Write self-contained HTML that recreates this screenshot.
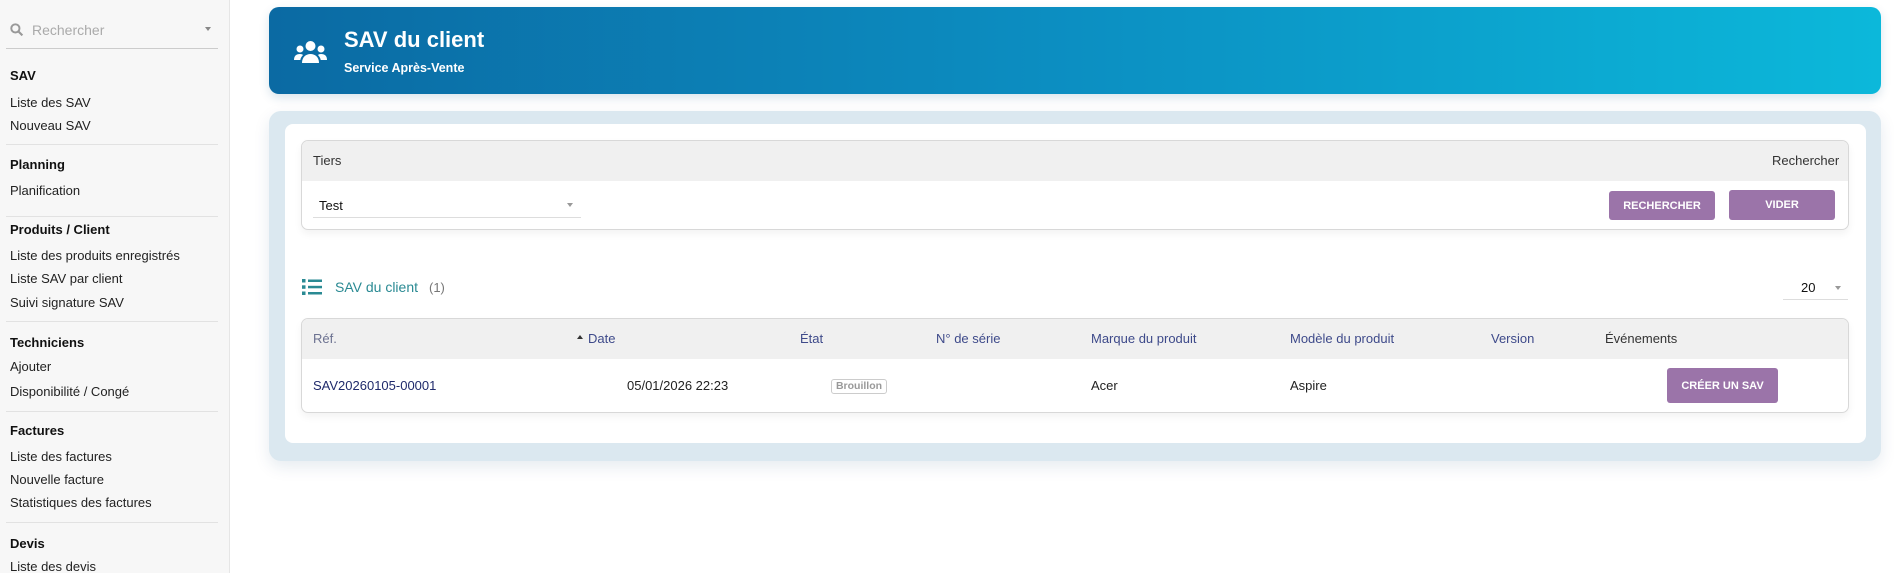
<!DOCTYPE html>
<html><head><meta charset="utf-8"><style>
*{box-sizing:border-box;margin:0;padding:0}
body{width:1894px;height:573px;overflow:hidden;background:#fff;font-family:"Liberation Sans",sans-serif;font-size:13px;color:#222;position:relative}
.abs{position:absolute;white-space:nowrap}
#side{position:absolute;left:0;top:0;width:230px;height:573px;background:#f7f7f7;border-right:1px solid #e6e6e6}
.h{font-weight:bold;font-size:13px;color:#111}
.i{font-size:13px;color:#222}
.dv{position:absolute;left:6px;width:212px;height:1px;background:#e2e2e2}
.btn{position:absolute;background:#9b74a9;color:#fff;font-weight:bold;font-size:11px;border-radius:3px;display:flex;align-items:center;justify-content:center}
.th{color:#3e4a8a;font-size:13px}
</style></head><body>
<div id="side">
<svg class="abs" style="left:10px;top:23px" width="14" height="14" viewBox="0 0 13 13"><circle cx="5" cy="5" r="3.8" fill="none" stroke="#999" stroke-width="1.8"/><path d="M8 8l3.5 3.5" stroke="#999" stroke-width="2"/></svg>
<div class="abs" style="left:32px;top:22px;color:#aaa;font-size:14px">Rechercher</div>
<div class="abs" style="left:205px;top:27px;border:3.5px solid transparent;border-top:4px solid #888;"></div>
<div class="abs" style="left:6px;top:48px;width:212px;height:1px;background:#ccc"></div>
<div class="abs h" style="left:10px;top:68px">SAV</div>
<div class="abs i" style="left:10px;top:95px">Liste des SAV</div>
<div class="abs i" style="left:10px;top:118px">Nouveau SAV</div>
<div class="dv" style="top:144px"></div>
<div class="abs h" style="left:10px;top:157px">Planning</div>
<div class="abs i" style="left:10px;top:183px">Planification</div>
<div class="dv" style="top:216px"></div>
<div class="abs h" style="left:10px;top:222px">Produits / Client</div>
<div class="abs i" style="left:10px;top:248px">Liste des produits enregistrés</div>
<div class="abs i" style="left:10px;top:271px">Liste SAV par client</div>
<div class="abs i" style="left:10px;top:295px">Suivi signature SAV</div>
<div class="dv" style="top:321px"></div>
<div class="abs h" style="left:10px;top:335px">Techniciens</div>
<div class="abs i" style="left:10px;top:359px">Ajouter</div>
<div class="abs i" style="left:10px;top:384px">Disponibilité / Congé</div>
<div class="dv" style="top:411px"></div>
<div class="abs h" style="left:10px;top:423px">Factures</div>
<div class="abs i" style="left:10px;top:449px">Liste des factures</div>
<div class="abs i" style="left:10px;top:472px">Nouvelle facture</div>
<div class="abs i" style="left:10px;top:495px">Statistiques des factures</div>
<div class="dv" style="top:522px"></div>
<div class="abs h" style="left:10px;top:536px">Devis</div>
<div class="abs i" style="left:10px;top:559px">Liste des devis</div>
</div>

<div class="abs" style="left:269px;top:7px;width:1612px;height:87px;border-radius:10px;background:linear-gradient(90deg,#0b6aa3,#0c8fc2 50%,#0cb8da);box-shadow:0 4px 10px rgba(0,80,130,.15)"></div>
<svg class="abs" style="left:294px;top:40px" width="33" height="24" viewBox="0 0 33 24"><circle cx="16.5" cy="6" r="5" fill="#fff"/><circle cx="6" cy="9" r="3.5" fill="#fff"/><circle cx="27" cy="9" r="3.5" fill="#fff"/><path d="M8 23c0-6 4-9 8.5-9s8.5 3 8.5 9z" fill="#fff"/><path d="M0 20c0-4 2-6 6-6 1.5 0 2.5.4 3 1-1.5 1.5-2.5 3.5-2.7 5z" fill="#fff"/><path d="M33 20c0-4-2-6-6-6-1.5 0-2.5.4-3 1 1.5 1.5 2.5 3.5 2.7 5z" fill="#fff"/></svg>
<div class="abs" style="left:344px;top:27px;color:#fff;font-weight:bold;font-size:22px">SAV du client</div>
<div class="abs" style="left:344px;top:61px;color:#fff;font-weight:bold;font-size:12.5px">Service Après-Vente</div>

<div class="abs" style="left:269px;top:111px;width:1612px;height:350px;border-radius:12px;background:#dbe8f0;box-shadow:0 6px 16px rgba(0,60,110,.1)"></div>
<div class="abs" style="left:285px;top:124px;width:1581px;height:319px;border-radius:8px;background:#fff"></div>

<div class="abs" style="left:301px;top:140px;width:1548px;height:90px;border:1px solid #d8d8d8;border-radius:7px;overflow:hidden;box-shadow:0 4px 8px rgba(0,0,0,.05)">
<div style="height:40px;background:#f0f0f0"></div></div>
<div class="abs" style="left:313px;top:153px;color:#333">Tiers</div>
<div class="abs" style="left:1772px;top:153px;color:#333">Rechercher</div>
<div class="abs" style="left:319px;top:198px;color:#111">Test</div>
<div class="abs" style="left:567px;top:203px;border:3px solid transparent;border-top:4px solid #999"></div>
<div class="abs" style="left:313px;top:217px;width:268px;height:1px;background:#ddd"></div>
<div class="btn" style="left:1609px;top:191px;width:106px;height:29px">RECHERCHER</div>
<div class="btn" style="left:1729px;top:190px;width:106px;height:30px">VIDER</div>

<svg class="abs" style="left:302px;top:279px" width="20" height="16" viewBox="0 0 20 16"><g fill="#2a8a93"><rect x="0" y="0" width="3.5" height="3.5"/><rect x="0" y="6.3" width="3.5" height="3.5"/><rect x="0" y="12.5" width="3.5" height="3.5"/><rect x="6" y="0.5" width="14" height="2.5"/><rect x="6" y="6.8" width="14" height="2.5"/><rect x="6" y="13" width="14" height="2.5"/></g></svg>
<div class="abs" style="left:335px;top:279px;color:#2a8a93;font-size:14px">SAV du client</div>
<div class="abs" style="left:429px;top:280px;color:#777;font-size:13px">(1)</div>
<div class="abs" style="left:1801px;top:280px;color:#111">20</div>
<div class="abs" style="left:1835px;top:286px;border:3px solid transparent;border-top:4px solid #999"></div>
<div class="abs" style="left:1783px;top:299px;width:65px;height:1px;background:#ddd"></div>

<div class="abs" style="left:301px;top:318px;width:1548px;height:95px;border:1px solid #d8d8d8;border-radius:7px;overflow:hidden;box-shadow:0 4px 8px rgba(0,0,0,.05)">
<div style="height:40px;background:#f0f0f0"></div></div>
<div class="abs th" style="left:313px;top:331px;color:#6b7190">Réf.</div>
<div class="abs" style="left:577px;top:335px;border:3.5px solid transparent;border-bottom:4px solid #333;border-top:0"></div>
<div class="abs th" style="left:588px;top:331px">Date</div>
<div class="abs th" style="left:800px;top:331px">État</div>
<div class="abs th" style="left:936px;top:331px">N° de série</div>
<div class="abs th" style="left:1091px;top:331px">Marque du produit</div>
<div class="abs th" style="left:1290px;top:331px">Modèle du produit</div>
<div class="abs th" style="left:1491px;top:331px">Version</div>
<div class="abs th" style="left:1605px;top:331px;color:#333">Événements</div>
<div class="abs" style="left:313px;top:378px;color:#1f2a6b">SAV20260105-00001</div>
<div class="abs" style="left:627px;top:378px;color:#222">05/01/2026 22:23</div>
<div class="abs" style="left:831px;top:379px;width:56px;height:15px;border:1px solid #ccc;border-radius:3px;color:#999;font-size:10.5px;font-weight:bold;text-align:center;line-height:13px">Brouillon</div>
<div class="abs" style="left:1091px;top:378px">Acer</div>
<div class="abs" style="left:1290px;top:378px">Aspire</div>
<div class="btn" style="left:1667px;top:368px;width:111px;height:35px">CRÉER UN SAV</div>
</body></html>
